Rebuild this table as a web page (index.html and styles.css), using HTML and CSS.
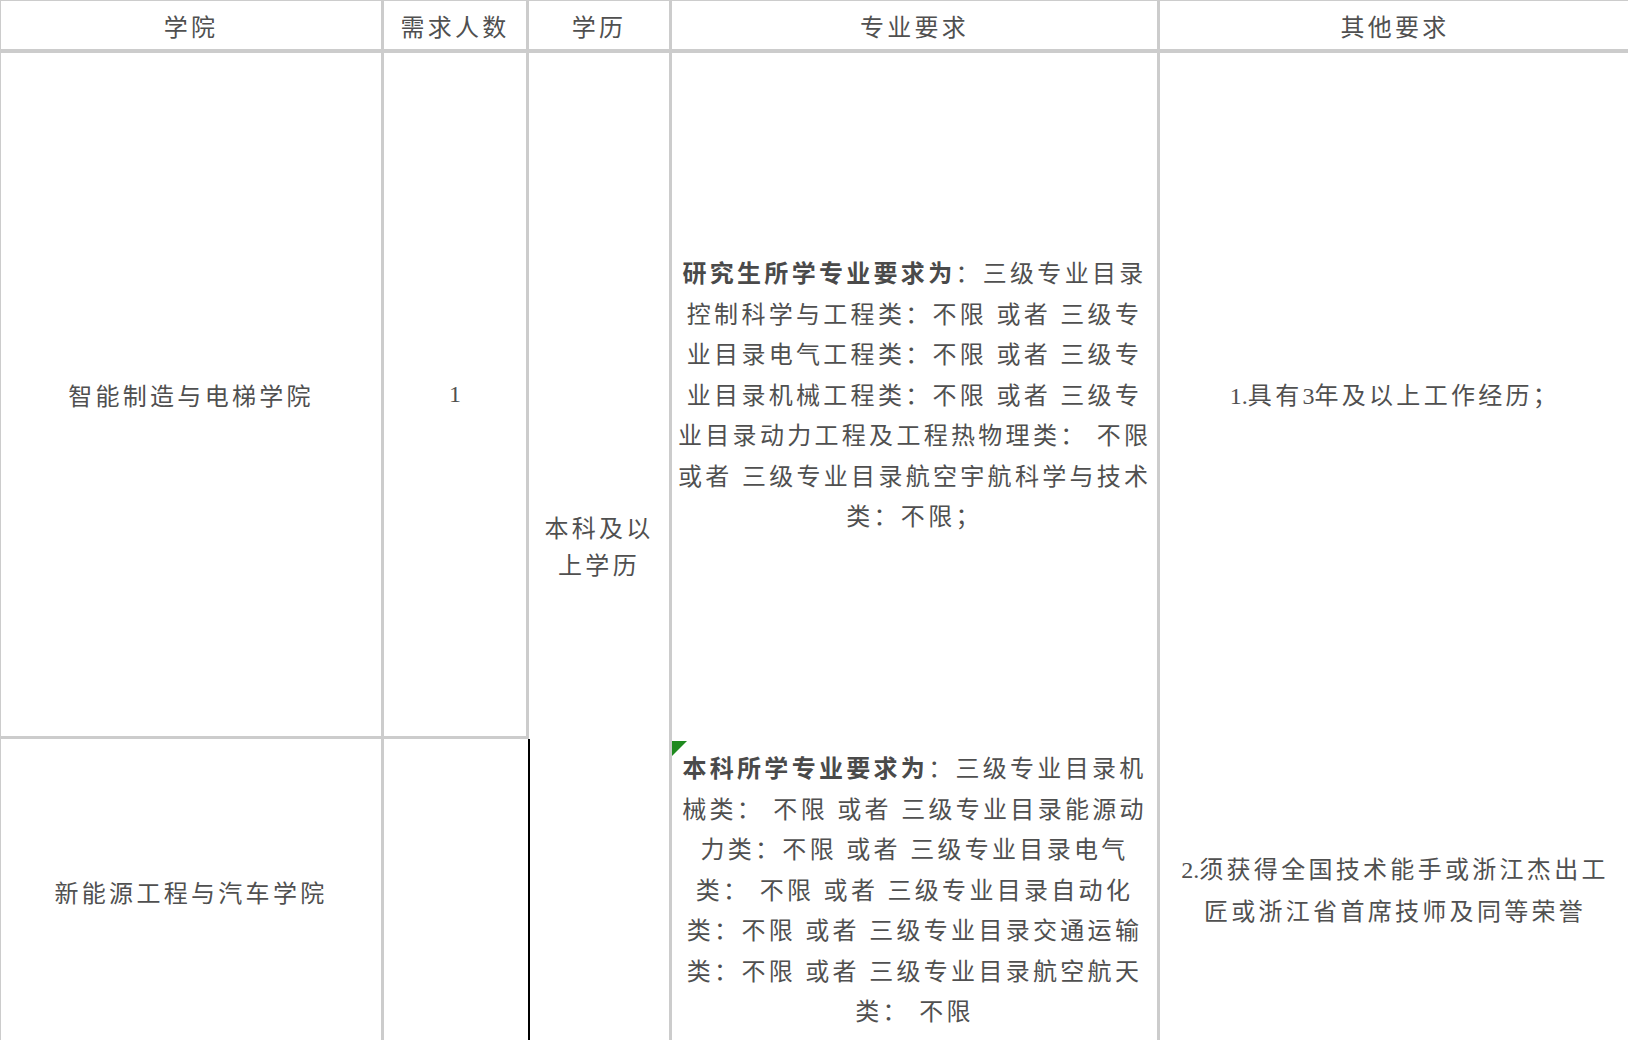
FILE: index.html
```html
<!DOCTYPE html>
<html lang="zh-CN">
<head>
<meta charset="utf-8">
<title>岗位需求表</title>
<link rel="stylesheet" href="styles.css">
</head>
<body>
<table class="grid">
  <colgroup>
    <col class="w1"><col class="w2"><col class="w3"><col class="w4"><col class="w5">
  </colgroup>
  <tr class="head">
    <th class="c1">学院</th>
    <th class="c2">需求人数</th>
    <th class="c3">学历</th>
    <th class="c4">专业要求</th>
    <th class="c5">其他要求</th>
  </tr>
  <tr class="r2">
    <td class="c1 sep">智能制造与电梯学院</td>
    <td class="c2 sep num">1</td>
    <td class="c3 edu" rowspan="2">本科及以<br>上学历</td>
    <td class="c4 major"><b>研究生所学专业要求为</b>：三级专业目录<br>控制科学与工程类：不限 或者 三级专<br>业目录电气工程类：不限 或者 三级专<br>业目录机械工程类：不限 或者 三级专<br>业目录动力工程及工程热物理类： 不限<br>或者 三级专业目录航空宇航科学与技术<br>类：不限；</td>
    <td class="c5 other"><span class="lat">1.</span>具有<span class="lat">3</span>年及以上工作经历；</td>
  </tr>
  <tr class="r3">
    <td class="c1">新能源工程与汽车学院</td>
    <td class="c2 cut"></td>
    <td class="c4 major note"><b>本科所学专业要求为</b>：三级专业目录机<br>械类： 不限 或者 三级专业目录能源动<br>力类：不限 或者 三级专业目录电气<br>类： 不限 或者 三级专业目录自动化<br>类：不限 或者 三级专业目录交通运输<br>类：不限 或者 三级专业目录航空航天<br>类： 不限</td>
    <td class="c5 other"><span class="lat">2.</span>须获得全国技术能手或浙江杰出工<br>匠或浙江省首席技师及同等荣誉</td>
  </tr>
</table>
</body>
</html>
```
FILE: styles.css
```css
html, body {
  margin: 0;
  padding: 0;
  overflow: hidden;
  background: #fff;
}

.grid {
  width: 1630px;
  table-layout: fixed;
  border-collapse: separate;
  border-spacing: 0;
  font-family: "Liberation Serif", "Noto Sans CJK SC", serif;
  font-size: 24px;
  letter-spacing: 3.3px;
  color: #505050;
}

.w1 { width: 384px; }
.w2 { width: 145px; }
.w3 { width: 143px; }
.w4 { width: 488px; }
.w5 { width: 470px; }

.grid th,
.grid td {
  box-sizing: border-box;
  padding: 0 6px;
  text-align: center;
  vertical-align: middle;
  border-right: 3px solid #ccc;
  white-space: nowrap;
}

.grid .c1 { border-left: 1px solid #ccc; }
.grid .c5 { border-right: none; }

.grid th {
  height: 53px;
  font-weight: normal;
  border-top: 1px solid #ccc;
  border-bottom: 4px solid #ccc;
  line-height: 40px;
  padding-top: 6px;
}

.r2 td { height: 686px; }
.r3 td { height: 304px; }

.grid td.sep { border-bottom: 3px solid #ccc; }

.num { font-size: 24px; letter-spacing: 0; padding-left: 12px; }

.lat { letter-spacing: 0; }

.edu { line-height: 37px; padding-top: 6px; }

.major {
  line-height: 40.5px;
  padding: 6px 6px 0 10px;
}

.major b { font-weight: 700; color: #4a4a4a; }

.other { line-height: 42px; padding-top: 2px; }

.grid td.cut {
  position: relative;
  border-right: 3px solid transparent;
}

.grid td.cut::after {
  content: "";
  position: absolute;
  top: 0;
  bottom: 0;
  right: -4px;
  width: 2px;
  background: #000;
}

.grid td.note { position: relative; }

.grid td.note::before {
  content: "";
  position: absolute;
  top: 2px;
  left: 0;
  width: 0;
  height: 0;
  border-top: 15px solid #1f8a1f;
  border-right: 15px solid transparent;
}
```
